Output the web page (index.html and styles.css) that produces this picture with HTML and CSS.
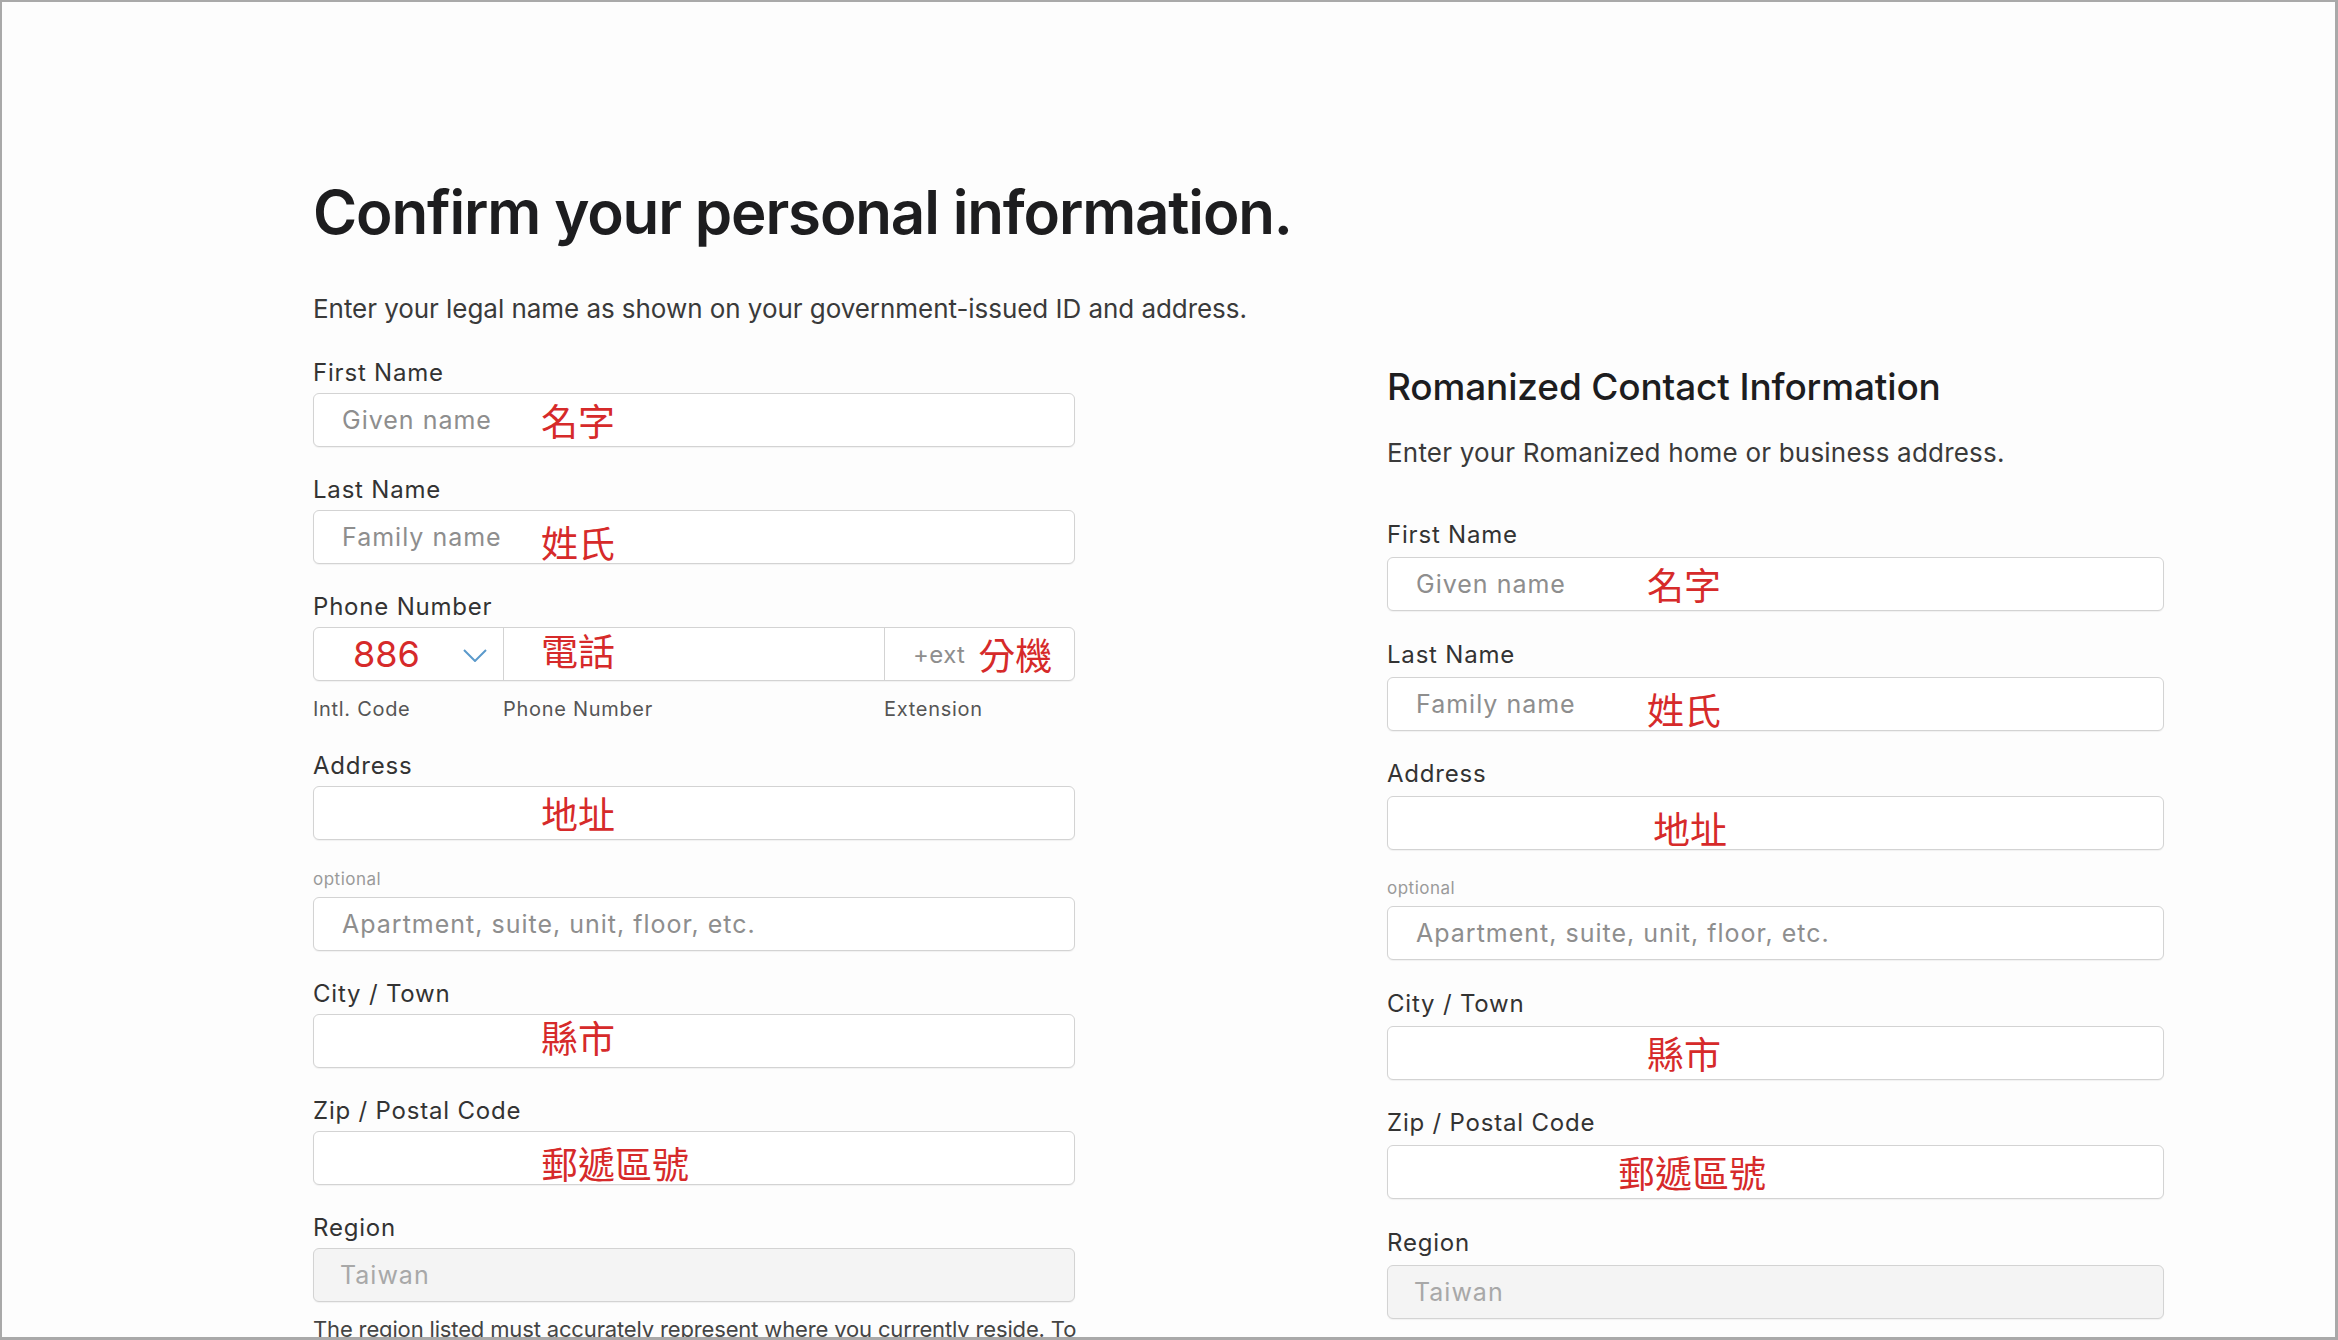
FILE: index.html
```html
<!DOCTYPE html>
<html lang="en">
<head>
    <meta charset="UTF-8">
    <meta name="viewport" content="width=device-width, initial-scale=1.0">
    <title>Confirm your personal information</title>
    <link rel="stylesheet" href="styles.css">
</head>
<body>
    <div class="frame">
        <div class="columns">
            <section class="col col-main">
                <h1 class="title">Confirm your personal information.</h1>
                <p class="intro">Enter your legal name as shown on your government-issued ID and address.</p>

                <div class="field">
                    <div class="label">First Name</div>
                    <div class="box"><span class="hint">Given name</span><span class="note">名字</span></div>
                </div>
                <div class="field">
                    <div class="label">Last Name</div>
                    <div class="box"><span class="hint">Family name</span><span class="note low">姓氏</span></div>
                </div>
                <div class="field field-phone">
                    <div class="label">Phone Number</div>
                    <div class="box phone">
                        <div class="seg seg-code">
                            <span class="code">886</span>
                            <svg class="chevron" width="24" height="13" viewBox="0 0 24 13"><polyline points="1,1 12,12 23,1" fill="none" stroke="#5b9acb" stroke-width="2"/></svg>
                        </div>
                        <div class="seg seg-number"><span class="note high">電話</span></div>
                        <div class="seg seg-ext"><span class="ext">+ext</span><span class="note">分機</span></div>
                    </div>
                    <div class="sublabels">
                        <span class="sub sub-code">Intl. Code</span>
                        <span class="sub sub-number">Phone Number</span>
                        <span class="sub">Extension</span>
                    </div>
                </div>
                <div class="field field-addr">
                    <div class="label">Address</div>
                    <div class="box"><span class="hint"></span><span class="note">地址</span></div>
                </div>
                <div class="field">
                    <div class="label optional">optional</div>
                    <div class="box"><span class="hint">Apartment, suite, unit, floor, etc.</span></div>
                </div>
                <div class="field">
                    <div class="label">City / Town</div>
                    <div class="box"><span class="hint"></span><span class="note high">縣市</span></div>
                </div>
                <div class="field">
                    <div class="label">Zip / Postal Code</div>
                    <div class="box"><span class="hint"></span><span class="note low">郵遞區號</span></div>
                </div>
                <div class="field field-region">
                    <div class="label">Region</div>
                    <div class="box locked"><span class="hint">Taiwan</span></div>
                </div>
                <p class="footnote">The region listed must accurately represent where you currently reside. To</p>
            </section>

            <section class="col col-roman">
                <h2 class="subtitle">Romanized Contact Information</h2>
                <p class="intro">Enter your Romanized home or business address.</p>

                <div class="field">
                    <div class="label">First Name</div>
                    <div class="box"><span class="hint">Given name</span><span class="note">名字</span></div>
                </div>
                <div class="field">
                    <div class="label">Last Name</div>
                    <div class="box"><span class="hint">Family name</span><span class="note low">姓氏</span></div>
                </div>
                <div class="field field-addr">
                    <div class="label">Address</div>
                    <div class="box"><span class="hint shift-right"></span><span class="note low">地址</span></div>
                </div>
                <div class="field">
                    <div class="label optional">optional</div>
                    <div class="box"><span class="hint">Apartment, suite, unit, floor, etc.</span></div>
                </div>
                <div class="field">
                    <div class="label">City / Town</div>
                    <div class="box"><span class="hint"></span><span class="note">縣市</span></div>
                </div>
                <div class="field">
                    <div class="label">Zip / Postal Code</div>
                    <div class="box"><span class="hint shift-left"></span><span class="note">郵遞區號</span></div>
                </div>
                <div class="field">
                    <div class="label">Region</div>
                    <div class="box locked"><span class="hint">Taiwan</span></div>
                </div>
            </section>
        </div>
    </div>
</body>
</html>
```

FILE: styles.css
```css
html, body {
    margin: 0;
    background: #fff;
}
body {
    font-family: Inter, "Noto Sans", sans-serif;
    color: #333;
}
.frame {
    box-sizing: border-box;
    width: 2338px;
    height: 1340px;
    border-top: 2px solid #a9a9a9;
    border-left: 2px solid #a9a9a9;
    border-right: 3px solid #a9a9a9;
    border-bottom: 3px solid #a9a9a9;
    overflow: hidden;
    background: #fdfdfd;
}
.columns {
    display: flex;
    align-items: flex-start;
    padding: 174px 0 0 311px;
}
.col-main {
    width: 762px;
}
.col-roman {
    width: 777px;
    margin-left: 312px;
    padding-top: 189px;
}

.title {
    margin: 0 0 45px;
    font-size: 60px;
    line-height: 72px;
    font-weight: 600;
    letter-spacing: -1.15px;
    color: #1d1d1f;
    white-space: nowrap;
}
.subtitle {
    margin: 0 0 28px;
    font-size: 37px;
    line-height: 44px;
    font-weight: 500;
    letter-spacing: -0.15px;
    color: #1d1d1f;
}
.intro {
    margin: 0 0 33px;
    font-size: 26px;
    line-height: 32px;
    letter-spacing: -0.05px;
    color: #3a3a3a;
    white-space: nowrap;
}
.col-roman .intro {
    letter-spacing: 0.2px;
    margin-bottom: 51px;
}

.field {
    margin-bottom: 28px;
}
.col-roman .field {
    margin-bottom: 28.5px;
}
.label {
    font-size: 24px;
    line-height: 30px;
    letter-spacing: 0.8px;
    margin-bottom: 5px;
    color: #333;
}
.col-roman .label {
    margin-bottom: 7px;
}
.label.optional {
    font-size: 17px;
    line-height: 22px;
    letter-spacing: 0.5px;
    margin-bottom: 7px;
    color: #9a9a9a;
}
.col-roman .label.optional {
    margin-bottom: 7px;
}
.field-addr {
    margin-bottom: 28px;
}
.col-roman .field-addr {
    margin-bottom: 27px;
}
.field-phone {
    margin-bottom: 29px;
}
.field-region {
    margin-bottom: 13px;
}

.box {
    box-sizing: border-box;
    display: flex;
    align-items: center;
    height: 54px;
    padding-left: 28px;
    border: 1px solid #d3d3d3;
    border-radius: 6px;
    background: #fff;
    box-shadow: 0 1px 1px rgba(0, 0, 0, 0.05);
}
.box.locked {
    background: #f4f4f4;
    padding-left: 26px;
}
.hint {
    flex: none;
    width: 199px;
    font-size: 25px;
    letter-spacing: 1px;
    color: #8e8e8e;
    white-space: nowrap;
}
.col-roman .hint {
    width: 231px;
}
.col-roman .hint.shift-right {
    width: 237px;
}
.col-roman .hint.shift-left {
    width: 202px;
}
.locked .hint {
    color: #a8a8a8;
}
.note {
    font-family: "Noto Sans CJK TC", "Noto Sans CJK SC", sans-serif;
    font-size: 37px;
    line-height: 40px;
    color: #d62a2a;
}
.note.low {
    margin-top: 10px;
}
.note.high {
    margin-bottom: 8px;
}

.phone {
    padding-left: 0;
}
.seg {
    display: flex;
    align-items: center;
    height: 100%;
}
.seg-code {
    box-sizing: border-box;
    width: 189px;
    padding-left: 39px;
}
.code {
    font-size: 36px;
    color: #d62a2a;
    width: 110px;
}
.chevron {
    margin-top: 2px;
}
.seg-number {
    box-sizing: border-box;
    width: 381px;
    padding-left: 37px;
    border-left: 1px solid #d3d3d3;
}
.seg-ext {
    flex: 1;
    padding-left: 28px;
    border-left: 1px solid #d3d3d3;
}
.ext {
    font-size: 24px;
    letter-spacing: 0.4px;
    color: #8e8e8e;
    margin-right: 13px;
}
.sublabels {
    display: flex;
    margin-top: 15px;
    font-size: 20px;
    line-height: 26px;
    letter-spacing: 0.7px;
    color: #555;
}
.sub-code {
    width: 190px;
}
.sub-number {
    width: 381px;
}
.footnote {
    margin: 0;
    font-size: 22px;
    line-height: 28px;
    letter-spacing: -0.15px;
    color: #444;
    white-space: nowrap;
}
```
